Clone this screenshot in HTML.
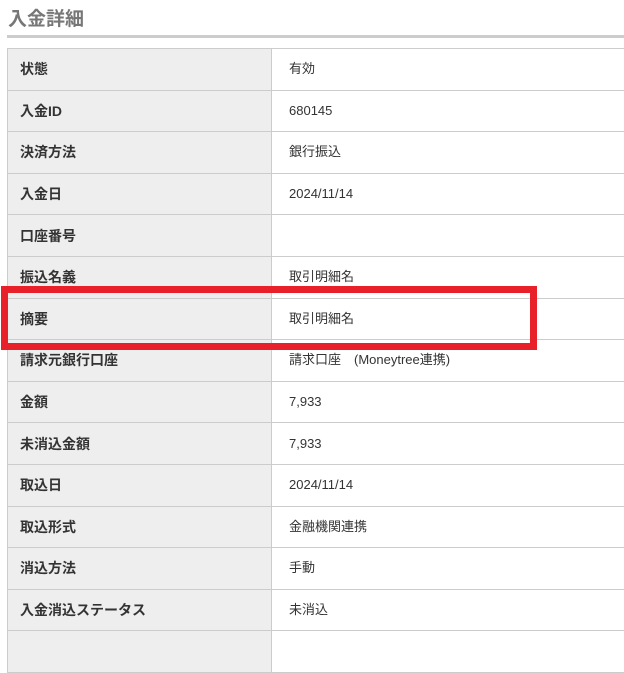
<!DOCTYPE html>
<html><head><meta charset="utf-8"><style>
body{margin:0;background:#fff;font-family:"Liberation Sans","Noto Sans CJK JP",sans-serif;width:624px;height:637px;overflow:hidden;position:relative}
h1{position:absolute;left:8px;top:7px;margin:0;font-size:19px;font-weight:bold;color:#777;line-height:26px}
.bar{position:absolute;left:7px;top:35px;width:617px;height:3px;background:#ccc}
table{position:absolute;left:7px;top:48px;border-collapse:collapse;width:640px}
td{height:40.6px;border:1px solid #ccc;padding:0;font-size:13px;color:#333;line-height:16px}
td.l{width:251px;background:#eee;font-weight:bold;font-size:14px;padding-left:12px}
td.v{padding-left:17px}
.box{position:absolute;left:1px;top:286px;width:522px;height:50px;border:7px solid #e8202a}
</style></head><body>
<h1>入金詳細</h1><div class="bar"></div>
<table>
<tr><td class="l">状態</td><td class="v">有効</td></tr>
<tr><td class="l">入金ID</td><td class="v">680145</td></tr>
<tr><td class="l">決済方法</td><td class="v">銀行振込</td></tr>
<tr><td class="l">入金日</td><td class="v">2024/11/14</td></tr>
<tr><td class="l">口座番号</td><td class="v"></td></tr>
<tr><td class="l">振込名義</td><td class="v">取引明細名</td></tr>
<tr><td class="l">摘要</td><td class="v">取引明細名</td></tr>
<tr><td class="l">請求元銀行口座</td><td class="v">請求口座　(Moneytree連携)</td></tr>
<tr><td class="l">金額</td><td class="v">7,933</td></tr>
<tr><td class="l">未消込金額</td><td class="v">7,933</td></tr>
<tr><td class="l">取込日</td><td class="v">2024/11/14</td></tr>
<tr><td class="l">取込形式</td><td class="v">金融機関連携</td></tr>
<tr><td class="l">消込方法</td><td class="v">手動</td></tr>
<tr><td class="l">入金消込ステータス</td><td class="v">未消込</td></tr>
<tr><td class="l"></td><td class="v"></td></tr>
</table>
<div class="box"></div>
</body></html>
